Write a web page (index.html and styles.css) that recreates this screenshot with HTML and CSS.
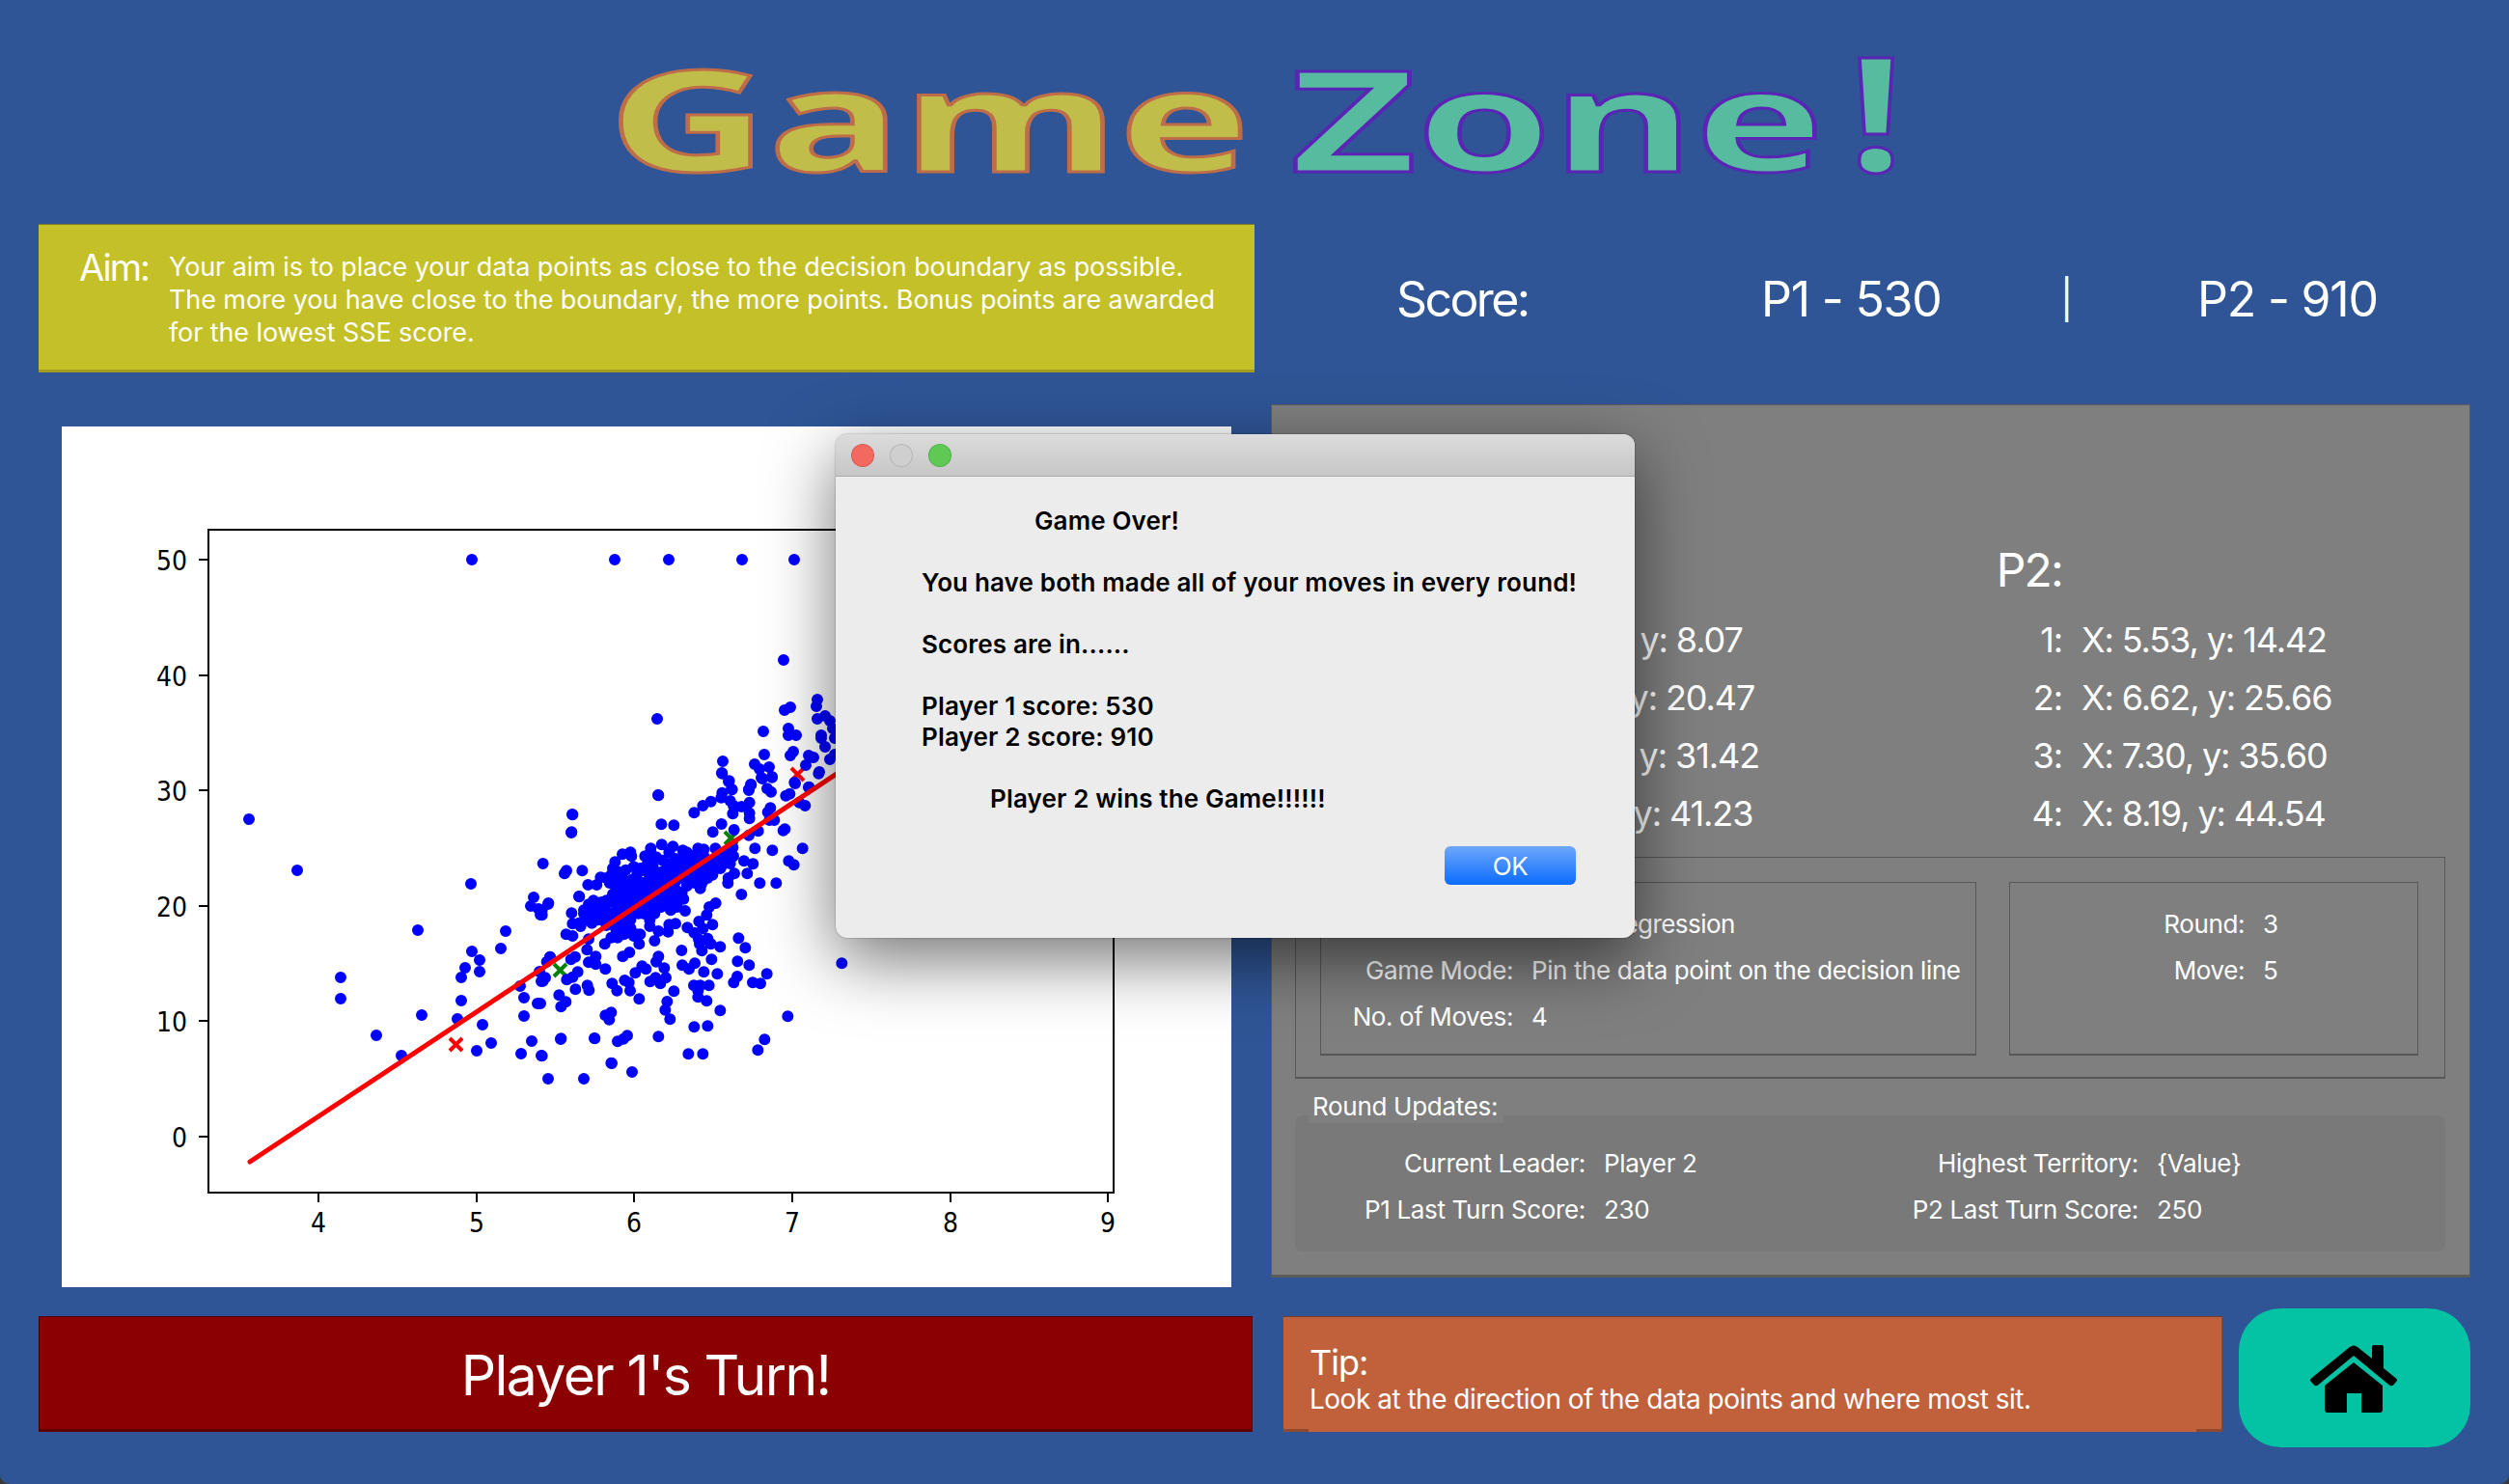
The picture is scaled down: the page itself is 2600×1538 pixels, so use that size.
FILE: index.html
```html
<!DOCTYPE html>
<html lang="en">
<head>
<meta charset="utf-8">
<title>Game Zone!</title>
<link rel="stylesheet" href="styles.css">
</head>
<body>
<div class="app">
  <header class="title">
    <svg class="title-svg" viewBox="0 0 2600 232" width="2600" height="232">
      <text class="word game" x="630" y="178" textLength="665" lengthAdjust="spacingAndGlyphs">Game</text>
      <text class="word zone" x="1337" y="178" textLength="553" lengthAdjust="spacingAndGlyphs">Zone</text>
      <text class="word zone bang" x="1915" y="178" textLength="58" lengthAdjust="spacingAndGlyphs">!</text>
    </svg>
  </header>

  <section class="top">
    <div class="aim">
      <div class="aim-label">Aim:</div>
      <p class="aim-text">Your aim is to place your data points as close to the decision boundary as possible.<br>The more you have close to the boundary, the more points. Bonus points are awarded<br>for the lowest SSE score.</p>
    </div>
    <div class="score">
      <span class="score-label">Score:</span><span>P1 - 530</span><span class="pipe">|</span><span>P2 - 910</span>
    </div>
  </section>

  <main class="board">
    <div class="plot">
      <svg class="plot-svg" viewBox="64 442 1212 892" width="1212" height="892">
        <g class="cross red">
          <path d="M466 1076l13 13m0-13l-13 13"/>
          <path d="M820 796l13 13m0-13l-13 13"/>
          <path d="M682 925l13 13m0-13l-13 13"/>
        </g>
        <g class="cross green">
          <path d="M574 999l13 13m0-13l-13 13"/>
          <path d="M751 862l13 13m0-13l-13 13"/>
        </g>
        <path class="dots" d="M489 580h0M637 580h0M693 580h0M769 580h0M823 580h0M258 849h0M308 902h0M488 916h0M681 745h0M812 684h0M682 824h0M593 844h0M592 863h0M847 725h0M846 732h0M813 736h0M819 733h0M847 745h0M855 742h0M860 747h0M863 755h0M851 762h0M851 765h0M865 765h0M791 758h0M817 755h0M817 762h0M825 762h0M855 774h0M792 782h0M822 779h0M819 783h0M838 783h0M843 785h0M860 787h0M865 782h0M749 789h0M782 792h0M787 797h0M797 795h0M835 793h0M849 800h0M748 801h0M790 807h0M800 805h0M824 812h0M755 810h0M778 813h0M776 818h0M758 818h0M838 816h0M553 930h0M550 939h0M558 942h0M560 948h0M433 964h0M524 965h0M519 983h0M489 986h0M497 995h0M482 1003h0M497 1007h0M478 1013h0M353 1013h0M353 1035h0M478 1037h0M437 1052h0M474 1056h0M500 1062h0M390 1073h0M416 1094h0M494 1089h0M509 1081h0M540 1092h0M551 1079h0M561 1094h0M543 1053h0M557 1040h0M543 1034h0M539 1022h0M568 1118h0M605 1118h0M634 1102h0M655 1111h0M581 1077h0M616 1076h0M561 1017h0M559 1007h0M570 992h0M568 937h0M600 929h0"/>
        <g transform="translate(560 800) scale(.33333)">
          <path class="dots-z" d="M565 5h0M587 28h0M596 55h0M655 40h0M648 57h0M687 18h0M720 17h0M705 52h0M717 62h0M565 65h0M562 80h0M530 92h0M505 105h0M478 127h0M590 90h0M600 105h0M598 130h0M625 108h0M650 95h0M650 128h0M650 145h0M715 112h0M707 125h0M727 150h0M712 150h0M790 33h0M835 47h0M775 68h0M763 74h0M805 95h0M823 105h0M865 5h0M367 73h0M100 133h0M97 187h0M376 163h0M415 166h0M563 162h0M536 187h0M602 180h0M677 184h0M648 197h0M760 178h0M755 182h0M667 238h0M721 244h0M815 238h0M772 277h0M788 289h0M633 277h0M661 286h0M643 316h0M682 346h0M733 346h0M625 381h0M603 316h0M584 330h0M583 346h0M937 595h0M769 760h0M697 832h0M676 865h0M559 742h0M704 628h0M684 658h0M660 655h0M601 655h0M612 636h0M649 601h0M613 589h0M637 547h0M616 517h0M550 628h0M532 583h0M508 622h0M559 544h0M535 475h0M545 408h0M525 420h0M517 445h0M493 465h0M457 484h0M478 500h0M505 487h0M492 520h0M520 518h0M530 535h0M495 535h0M502 556h0M439 555h0M441 601h0M462 613h0M480 595h0M477 664h0M497 664h0M524 664h0M490 680h0M490 700h0M517 712h0M415 682h0M394 714h0M388 740h0M403 769h0M478 793h0M520 790h0M460 877h0M505 877h0M367 823h0M270 820h0M258 830h0M240 838h0M169 829h0M64 829h0M5 883h0M220 905h0M220 748h0M202 757h0M214 770h0M307 706h0M279 680h0M238 680h0M223 658h0M262 648h0M275 655h0M295 625h0M316 604h0M328 613h0M341 652h0M358 640h0M373 658h0M390 640h0M385 610h0M367 574h0M360 590h0M202 613h0M172 598h0M172 574h0M150 592h0M146 664h0M151 679h0M109 676h0M116 622h0M100 638h0M82 646h0M58 694h0M79 715h0M64 730h0M0 720h0M8 650h0M15 640h0M256 574h0M277 561h0M307 535h0M355 525h0M200 535h0M145 553h0M108 575h0M95 583h0M30 575h0M20 590h0M8 285h0M81 307h0M75 316h0M130 307h0M25 408h0M5 430h0M5 445h0M121 388h0M97 439h0M100 472h0M148 351h0M175 351h0M187 328h0M232 280h0M255 256h0M280 250h0M283 262h0M325 262h0M343 238h0M377 226h0M412 232h0M443 244h0M490 238h0M508 241h0M544 238h0M598 235h0M600 262h0M583 280h0M575 262h0M550 300h0M520 300h0M535 320h0M505 340h0M497 362h0M480 345h0M460 330h0M445 310h0M420 300h0M400 300h0M380 310h0M360 320h0M340 330h0M320 345h0M300 320h0M290 295h0M310 300h0M265 305h0M240 310h0M220 320h0M235 345h0M235 360h0M270 352h0M300 365h0M225 380h0M240 395h0M265 395h0M190 405h0M150 412h0M135 440h0M155 440h0M175 430h0M200 425h0M240 420h0M290 440h0M305 440h0M270 460h0M250 470h0M280 460h0M340 460h0M355 440h0M375 420h0M405 430h0M405 415h0M450 432h0M440 375h0M445 395h0M420 365h0M400 385h0M425 395h0M350 400h0M370 390h0M340 480h0M367 495h0M400 475h0M420 472h0M397 497h0M300 505h0M290 510h0M260 505h0M240 515h0M220 515h0M250 490h0M125 480h0M160 470h0M205 477h0M150 520h0M80 505h0M100 510h0M155 455h0M340 270h0M360 265h0M380 275h0M400 250h0M420 270h0M440 270h0M470 260h0M490 260h0M510 265h0M530 280h0M500 300h0M475 300h0M450 290h0M430 285h0M500 320h0M520 330h0M480 320h0M370 340h0M350 350h0M390 330h0M410 320h0M330 370h0M310 385h0M290 400h0M270 410h0M250 440h0M220 440h0M180 460h0M590 265h0M570 250h0M590 285h0M330 290h0M350 295h0M395 285h0M455 250h0M515 285h0M470 285h0M440 330h0M420 340h0M310 345h0M285 335h0M255 330h0M215 345h0M205 400h0M225 405h0M165 400h0M170 450h0M195 450h0M215 465h0M235 455h0M265 430h0M320 420h0M340 420h0M325 400h0M355 370h0M380 365h0M400 355h0M385 415h0M425 420h0M360 420h0M320 440h0M265 480h0M235 490h0M310 505h0M280 485h0M245 345h0M285 370h0M260 375h0M330 310h0M560 300h0M555 270h0M565 290h0M490 285h0M500 350h0M455 355h0M120 470h0M140 460h0M135 430h0M205 330h0M225 300h0"/>
        </g>
        <line class="fit" x1="259" y1="1204" x2="1000" y2="714"/>
        <rect class="frame" x="216" y="549" width="938" height="687"/>
        <path class="ticks" d="M206 580h10M206 700h10M206 819h10M206 939h10M206 1058h10M206 1178h10M330 1236v10M494 1236v10M657 1236v10M821 1236v10M985 1236v10M1148 1236v10"/>
        <g class="ylab">
          <text x="194" y="591" textLength="32" lengthAdjust="spacingAndGlyphs">50</text><text x="194" y="711" textLength="32" lengthAdjust="spacingAndGlyphs">40</text><text x="194" y="830" textLength="32" lengthAdjust="spacingAndGlyphs">30</text><text x="194" y="950" textLength="32" lengthAdjust="spacingAndGlyphs">20</text><text x="194" y="1069" textLength="32" lengthAdjust="spacingAndGlyphs">10</text><text x="194" y="1189" textLength="16" lengthAdjust="spacingAndGlyphs">0</text>
        </g>
        <g class="xlab">
          <text x="330" y="1277" textLength="16" lengthAdjust="spacingAndGlyphs">4</text><text x="494" y="1277" textLength="16" lengthAdjust="spacingAndGlyphs">5</text><text x="657" y="1277" textLength="16" lengthAdjust="spacingAndGlyphs">6</text><text x="821" y="1277" textLength="16" lengthAdjust="spacingAndGlyphs">7</text><text x="985" y="1277" textLength="16" lengthAdjust="spacingAndGlyphs">8</text><text x="1148" y="1277" textLength="16" lengthAdjust="spacingAndGlyphs">9</text>
        </g>
      </svg>
    </div>

    <aside class="panel">
      <div class="players">
        <div class="player">
          <div class="p-head">P1:</div><div></div>
          <div class="p-num">1:</div><div>X: 4.87, y: 8.07</div>
          <div class="p-num">2:</div><div>X: 6.17, y: 20.47</div>
          <div class="p-num">3:</div><div>X: 7.05, y: 31.42</div>
          <div class="p-num">4:</div><div>X: 7.91, y: 41.23</div>
        </div>
        <div class="player">
          <div class="p-head">P2:</div><div></div>
          <div class="p-num">1:</div><div>X: 5.53, y: 14.42</div>
          <div class="p-num">2:</div><div>X: 6.62, y: 25.66</div>
          <div class="p-num">3:</div><div>X: 7.30, y: 35.60</div>
          <div class="p-num">4:</div><div>X: 8.19, y: 44.54</div>
        </div>
      </div>

      <div class="group">
        <div class="box box-game">
          <span class="k">Model:</span><span class="v v-tight">Linear Regression</span>
          <span class="k">Game Mode:</span><span class="v">Pin the data point on the decision line</span>
          <span class="k">No. of Moves:</span><span class="v">4</span>
        </div>
        <div class="box box-round">
          <span class="k">Round:</span><span class="v">3</span>
          <span class="k">Move:</span><span class="v">5</span>
        </div>
      </div>

      <div class="updates-label">Round Updates:</div>
      <div class="updates">
        <span class="k">Current Leader:</span><span class="v">Player 2</span>
        <span class="k">Highest Territory:</span><span class="v">{Value}</span>
        <span class="k">P1 Last Turn Score:</span><span class="v">230</span>
        <span class="k">P2 Last Turn Score:</span><span class="v">250</span>
      </div>
    </aside>
  </main>

  <footer class="footer">
    <div class="turn">Player 1's Turn!</div>
    <div class="tip">
      <div class="tip-head">Tip:</div>
      <div class="tip-text">Look at the direction of the data points and where most sit.</div>
    </div>
    <button class="home" type="button" aria-label="Home">
      <svg viewBox="0 0 120 95" width="120" height="95">
        <path d="M15 47.500L55 15Q59 12 63 15L78 27V15Q78 13 80 13H88Q90 13 90 15V37L103 47.500Q105 49 103.500 50.500L100 54.500Q98 56 96 54.500L59 24L22 54.500Q20 56 18 54.500L14.500 50.500Q13 49 15 47.500Z"/>
        <path d="M29 55L59 31L89 55V80Q89 83 86 83H67V63H52V83H32Q29 83 29 80Z"/>
      </svg>
    </button>
  </footer>

  <div class="modal">
    <div class="modal-bar">
      <span class="light l-red"></span><span class="light l-grey"></span><span class="light l-green"></span>
    </div>
    <div class="modal-body">
      <p class="m-over">Game Over!</p>
      <p>You have both made all of your moves in every round!</p>
      <p>Scores are in......</p>
      <p class="m-tight">Player 1 score: 530</p>
      <p>Player 2 score: 910</p>
      <p class="m-win">Player 2 wins the Game!!!!!!</p>
      <div class="m-actions"><button class="ok" type="button">OK</button></div>
    </div>
  </div>
</div>
</body>
</html>
```
FILE: styles.css
```css
* { box-sizing: border-box; }
html { background: #3a3a3a; }
body { margin: 0; width: 2600px; height: 1538px; font-family: Inter, "Liberation Sans", sans-serif; color: #fff; overflow: hidden; }
.app { position: relative; width: 2600px; height: 1538px; background: #2f5596; border-radius: 0 0 10px 10px; }

.title { height: 232px; }
.title-svg { display: block; }
.word { font-family: "Open Sans", sans-serif; font-weight: 700; font-size: 146px; stroke-width: 3px; }
.word.bang { font-size: 165px; }
.game { fill: #c1bd4a; stroke: #bf6d48; }
.zone { fill: #56bb9f; stroke: #5a25b5; }

.top { display: flex; height: 154px; padding-left: 40px; }
.aim { width: 1260px; display: flex; padding: 27px 0 0 42px; background: #c4c028; border-top: 1px solid #77752a; border-bottom: 3px solid #a19d22; }
.aim-label { width: 93px; font-size: 38px; line-height: 34px; letter-spacing: -2px; }
.aim-text { margin: 0; font-size: 27px; line-height: 34px; letter-spacing: -0.1px; white-space: nowrap; }
.score { flex: 1; display: grid; grid-template-columns: 378px 310px 142px 1fr; align-items: center; padding: 2px 0 0 147px; font-size: 50px; letter-spacing: -1.2px; }
.score-label { letter-spacing: -2.600px; }
.pipe { font-size: 40px; }

.board { display: grid; grid-template-columns: 1260px 1243px; column-gap: 17px; height: 970px; padding: 33px 0 0 40px; }
.plot { width: 1212px; height: 892px; margin: 23px 0 0 24px; background: #fff; }
.plot-svg { display: block; }
.dots { fill: none; stroke: #0000ff; stroke-width: 12px; stroke-linecap: round; }
.dots-z { fill: none; stroke: #0000ff; stroke-width: 36px; stroke-linecap: round; }
.cross path { fill: none; stroke-width: 4px; }
.red path { stroke: #ff0000; }
.green path { stroke: #008000; }
.fit { stroke: #ff0000; stroke-width: 5px; stroke-linecap: round; }
.frame { fill: none; stroke: #000; stroke-width: 2px; }
.ticks { fill: none; stroke: #000; stroke-width: 2px; }
.ylab text, .xlab text { font-family: "DejaVu Sans", sans-serif; font-size: 28px; fill: #000; }
.ylab text { text-anchor: end; }
.xlab text { text-anchor: middle; }

.panel { height: 905px; padding-top: 140px; background: #7f7f7f; border: 1px solid #5c5c5c; border-bottom-width: 3px; font-size: 26px; }
.players { display: grid; grid-template-columns: 583px 1fr; padding-left: 116px; }
.player { display: grid; grid-template-columns: 120px 1fr; grid-template-rows: 73px; grid-auto-rows: 60px; column-gap: 20px; align-items: center; font-size: 36px; letter-spacing: -1.1px; white-space: nowrap; }
.p-head { font-size: 48px; letter-spacing: -1.8px; text-align: right; margin-bottom: 13px; }
.p-num { text-align: right; }

.group { display: flex; gap: 34px; height: 230px; margin: 15px 25px 0 24px; padding: 25px 25px 0; border: 1px solid #575757; border-bottom-width: 2px; }
.box { display: grid; grid-auto-rows: 48px; align-items: center; height: 180px; padding-top: 18px; border: 1px solid #575757; border-bottom-width: 2px; white-space: nowrap; letter-spacing: -0.4px; }
.box-game { width: 680px; grid-template-columns: 199px 1fr; }
.box-round { width: 424px; grid-template-columns: 243px 1fr; }
.k { text-align: right; }
.v { padding-left: 19px; }
.v-tight { letter-spacing: -0.55px; }

.updates-label { width: 202px; height: 34px; margin: 12px 0 -8px 38px; padding: 0 4px; position: relative; z-index: 1; background: #7f7f7f; line-height: 34px; letter-spacing: -0.3px; white-space: nowrap; }
.updates { display: grid; grid-template-columns: 301px 218px 355px 1fr; grid-auto-rows: 48px; align-items: center; height: 141px; margin: 0 25px 0 24px; padding-top: 25px; background: #797979; border-radius: 8px; letter-spacing: -0.35px; white-space: nowrap; }

.footer { display: flex; align-items: flex-start; padding-left: 40px; }
.turn { width: 1258px; height: 120px; margin-top: 8px; padding-top: 4px; display: flex; align-items: center; justify-content: center; background: #8b0000; border: 1px solid #4a0000; border-bottom: 3px solid #5f0000; font-size: 57px; letter-spacing: -1.6px; }
.tip { width: 973px; height: 120px; margin: 8px 0 0 32px; padding: 25px 0 0 27px; background: linear-gradient(#8f4a2e, #8f4a2e) left bottom / 26px 3px no-repeat, linear-gradient(#8f4a2e, #8f4a2e) right bottom / 26px 3px no-repeat, #c1613b; border-top: 1px solid #7a3d25; border-right: 1px solid #8f4a2e; font-size: 28px; }
.tip-head { font-size: 36px; line-height: 44px; letter-spacing: -1px; }
.tip-text { line-height: 32px; letter-spacing: -0.5px; white-space: nowrap; }
.home { width: 240px; height: 144px; margin-left: 17px; padding: 0; display: flex; align-items: center; justify-content: center; background: #03c3a4; border: 0; border-radius: 44px; }
.home svg { fill: #000; }

.modal { position: absolute; left: 866px; top: 450px; width: 828px; height: 522px; border-radius: 12px; background: #ececec; color: #000; box-shadow: 0 22px 70px rgba(0, 0, 0, 0.55), 0 0 2px rgba(0, 0, 0, 0.4); overflow: hidden; }
.modal-bar { display: flex; gap: 16px; align-items: center; height: 44px; padding-left: 16px; background: linear-gradient(#dcdcdc, #c6c6c6); border-bottom: 1px solid #a8a8a8; }
.light { width: 24px; height: 24px; border-radius: 50%; border: 1px solid rgba(0, 0, 0, 0.12); }
.l-red { background: #f4695f; }
.l-grey { background: #cfcfcf; }
.l-green { background: #5fc955; }
.modal-body { padding: 30px 61px 0 89px; font-size: 26px; font-weight: 600; letter-spacing: 0.15px; }
.modal-body p { margin: 0 0 32px; line-height: 32px; white-space: nowrap; }
.modal-body .m-tight { margin-bottom: 0; }
.modal-body .m-over { margin-left: 117px; }
.modal-body .m-win { margin-left: 71px; margin-bottom: 33px; }
.m-actions { display: flex; justify-content: flex-end; }
.ok { width: 136px; height: 40px; padding: 0; border: 0; border-radius: 6px; background: linear-gradient(#6ea7fb, #0a6cff); color: #fff; font: 400 26px Inter, sans-serif; letter-spacing: -0.3px; }
```
